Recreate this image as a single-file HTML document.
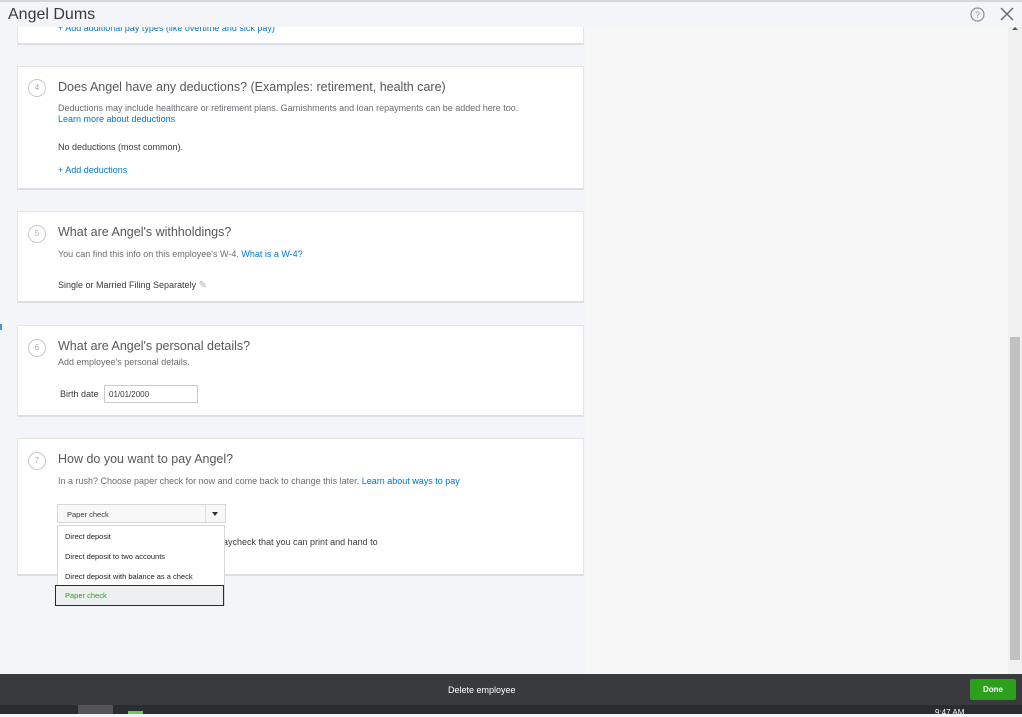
<!DOCTYPE html>
<html><head><style>
*{margin:0;padding:0;box-sizing:border-box}
body{width:1022px;height:714px;overflow:hidden;background:#f4f5f8;font-family:"Liberation Sans",sans-serif;position:relative;color:#393a3d}
.top{position:absolute;left:0;top:0;width:1022px;height:27px;background:#f4f5f8;border-top:2px solid #d4d7dc;z-index:5}
.top h1{position:absolute;left:8px;top:4px;font-size:16px;font-weight:normal;color:#393a3d}
.right{position:absolute;left:585px;top:20px;width:423px;height:654px;background:#f7f7f7}
.sb{position:absolute;left:1008px;top:20px;width:14px;height:654px;background:#f0f0f0}
.thumb{position:absolute;left:2px;top:317px;width:10px;height:323px;background:#c1c1c1}
.card{position:absolute;left:17px;width:567px;background:#fff;border:1px solid #e3e5e8;border-bottom:2px solid #dcdee2}
.num{position:absolute;left:10px;width:18px;height:18px;border:1px solid #c8cacd;border-radius:50%;font-size:8px;color:#aaa;text-align:center;line-height:16px}
.t{position:absolute;left:40px;font-size:12.5px;color:#54575b;white-space:nowrap}
.s{position:absolute;left:40px;font-size:9px;color:#6b6c72;white-space:nowrap}
.l{color:#0077c5}
.b{position:absolute;left:40px;font-size:9px;color:#393a3d;white-space:nowrap}
.foot{position:absolute;left:0;top:674px;width:1022px;height:31px;background:#393a3d}
.task{position:absolute;left:0;top:705px;width:1022px;height:9px;background:#2b2c2f}
</style></head><body>
<div class="top"><h1>Angel Dums</h1>
<svg style="position:absolute;left:970px;top:5px" width="15" height="15" viewBox="0 0 15 15"><circle cx="7.5" cy="7.5" r="6.5" fill="none" stroke="#8d9096" stroke-width="1.2"/><text x="7.5" y="11" font-size="9" text-anchor="middle" fill="#8d9096" font-family="Liberation Sans">?</text></svg>
<svg style="position:absolute;left:1000px;top:5px" width="14" height="14"><path d="M1 1L13 13M13 1L1 13" stroke="#6b6c72" stroke-width="1.5"/></svg>
</div>
<div class="right"></div>
<div class="sb"><div style="position:absolute;left:4px;top:4px;border:3px solid transparent;border-bottom:3px solid #555"></div><div class="thumb"></div></div>
<div class="card" style="top:10px;height:35px"><div class="s l" style="top:12px">+ Add additional pay types (like overtime and sick pay)</div></div>
<div class="card" style="top:66px;height:124px">
<div class="num" style="top:12px">4</div><div class="t" style="top:13px">Does Angel have any deductions? (Examples: retirement, health care)</div>
<div class="s" style="top:36px">Deductions may include healthcare or retirement plans. Garnishments and loan repayments can be added here too.</div>
<div class="s l" style="top:47px">Learn more about deductions</div>
<div class="b" style="top:75px">No deductions (most common).</div>
<div class="s l" style="top:98px">+ Add deductions</div></div>
<div class="card" style="top:211px;height:92px">
<div class="num" style="top:13px">5</div><div class="t" style="top:13px">What are Angel's withholdings?</div>
<div class="s" style="top:37px">You can find this info on this employee's W-4. <span class="l">What is a W-4?</span></div>
<div class="b" style="top:68px">Single or Married Filing Separately <span style="color:#aaa;font-size:10px">✎</span></div></div>
<div style="position:absolute;left:0;top:324px;width:2px;height:6px;background:#5b8fc7"></div>
<div class="card" style="top:325px;height:92px">
<div class="num" style="top:13px">6</div><div class="t" style="top:13px">What are Angel's personal details?</div>
<div class="s" style="top:31px">Add employee's personal details.</div>
<div class="b" style="top:63px;left:42px">Birth date</div>
<div style="position:absolute;left:86px;top:59px;width:94px;height:18px;border:1px solid #c8cacd;font-size:8px;padding:4px 4px">01/01/2000</div></div>
<div class="card" style="top:438px;height:138px">
<div class="num" style="top:13px">7</div><div class="t" style="top:13px">How do you want to pay Angel?</div>
<div class="s" style="top:37px">In a rush? Choose paper check for now and come back to change this later. <span class="l">Learn about ways to pay</span></div>
<div class="b" style="top:98px;left:200px">paycheck that you can print and hand to</div></div>
<div style="position:absolute;left:57px;top:504px;width:169px;height:19px;border:1px solid #d4d7dc;background:#f8f8f8;font-size:7.5px;padding:5px 9px">Paper check<span style="position:absolute;left:147px;top:0;width:1px;height:17px;background:#ddd"></span><span style="position:absolute;left:154px;top:7px;border:3px solid transparent;border-top:4px solid #333"></span></div>
<div style="position:absolute;left:57px;top:525px;width:168px;height:81px;background:#fff;border:1px solid #d4d7dc;font-size:7.5px;color:#222">
<div style="position:absolute;left:7px;top:6px">Direct deposit</div>
<div style="position:absolute;left:7px;top:26px">Direct deposit to two accounts</div>
<div style="position:absolute;left:7px;top:46px">Direct deposit with balance as a check</div></div>
<div style="position:absolute;left:55px;top:585px;width:169px;height:21px;background:#eeeff1;border:1px solid #2a2a2a;font-size:7.5px;color:#2ca01c;padding:5px 9px">Paper check</div>
<div class="foot"><div style="position:absolute;left:448px;top:11px;font-size:9px;color:#fff">Delete employee</div>
<div style="position:absolute;left:970px;top:5px;width:46px;height:21px;background:#2ca01c;border-radius:2px;color:#fff;font-size:8px;font-weight:bold;text-align:center;line-height:21px">Done</div></div>
<div class="task"><div style="position:absolute;left:78px;top:0;width:35px;height:9px;background:#555"></div><div style="position:absolute;left:128px;top:6px;width:15px;height:3px;background:#7dbf6a"></div><div style="position:absolute;left:935px;top:3px;font-size:8px;color:#fff">9:47 AM</div></div>
</body></html>
